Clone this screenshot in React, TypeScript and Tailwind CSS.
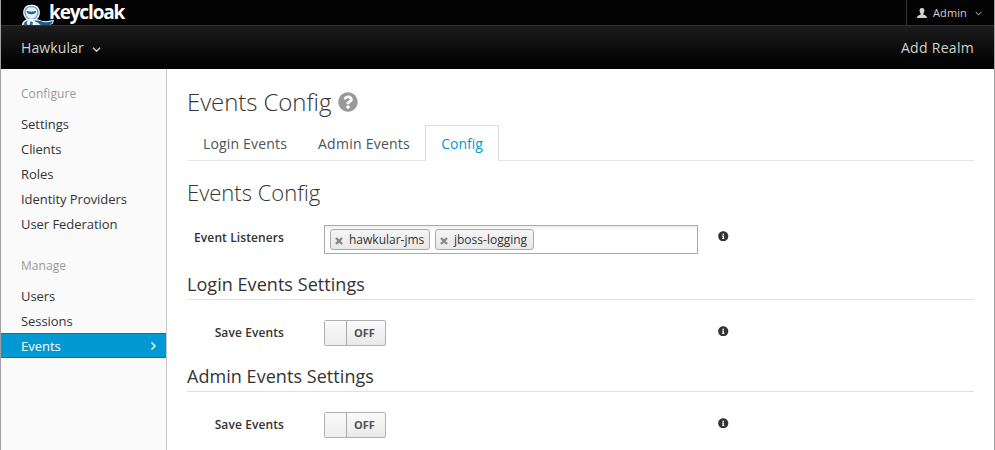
import React from "react";
import { FaInfoCircle, FaQuestionCircle } from "react-icons/fa";

function Logo() {
  return (
    <svg width="34" height="21" viewBox="0 0 34 21" className="shrink-0">
      <path d="M1 21C1 18.500 2.500 16.500 5.500 15.500C2.500 12.500 1.500 9.500 2.500 6C3.500 2.500 6 .8 10.300 .8C15 .8 17.500 2.500 18.500 6C19.500 9.500 18.500 12.500 16 15.300C19 15.800 21 17.500 25 17.300C28 17 30 16.200 33 16L32 19.500L29 21Z" fill="#ffffff" />
      <path d="M10.300 2C14.500 2 16.800 3.600 17.500 6.500C18.300 9.800 17 12.500 14.500 15H6.500C3.800 12.500 2.800 9.800 3.400 6.500C4 3.600 6.200 2 10.300 2Z" fill="#6fa9cd" />
      <path d="M10.300 3.200C14 3.200 16 5 16.200 8C16.200 11.500 14 14.700 10.300 14.700C6.800 14.700 4.700 11.500 4.700 8C4.700 5 7 3.200 10.300 3.200Z" fill="#e6f0f7" />
      <path d="M5.500 7L10.300 7.800L15.300 7C15 9.300 13.300 10.300 10.300 10.300C7.500 10.300 5.800 9.300 5.500 7Z" fill="#17639a" />
      <path d="M12.500 16.500C19 16 21.500 18 25 18.200C28 18.200 30 17.500 32 17L31 19L29 21H18L16 18.500Z" fill="#1b5f92" />
      <path d="M2.500 21C3 18.500 4 17.500 7 16.300L6 18.500L6.500 21ZM10 17L12 18.500L11.500 21H8.500L9 18.500Z" fill="#2c6f9f" />
      <path d="M13 21L14 18.500L17 18.500L19.500 21Z" fill="#e0ebf3" />
    </svg>
  );
}

function Chevron({ className, size, right = false }: { className?: string; size: number; right?: boolean }) {
  return (
    <svg width={size} height={size} viewBox="0 0 10 10" className={className} fill="none" stroke="currentColor" strokeWidth="1.4">
      <path d={right ? "M3.500 1.500L7 5L3.500 8.500" : "M1 3L5 7L9 3"} />
    </svg>
  );
}

function NavGroup({ title, items, active }: { title: string; items: string[]; active?: string }) {
  return (
    <div>
      <div className="flex h-[26px] items-center pl-5 text-[12px] tracking-[0.05px] text-[#999]">{title}</div>
      <div className="pt-[4px]">
        {items.map((item) => (
          <div
            key={item}
            className={
              item === active
                ? "flex h-[25px] items-center justify-between border-y border-[#0079ad] bg-[#0099d3] pr-[8px] pl-5 text-[13px] text-white"
                : "flex h-[25px] items-center pl-5 text-[13px] tracking-[-0.05px] text-[#333]"
            }
          >
            <span className="pt-[2px]">{item}</span>
            {item === active && <Chevron size={10} right />}
          </div>
        ))}
      </div>
    </div>
  );
}

function Tag({ label, className }: { label: string; className: string }) {
  return (
    <span className={`flex h-[21px] items-center rounded-[3px] border border-[#aaa] bg-linear-to-b from-[#f4f4f4] to-[#e8e8e8] pl-[4px] text-[12px] text-[#333] ${className}`}>
      <svg width="8" height="8" viewBox="0 0 8 8" className="mt-[2px] mr-[6px] shrink-0" stroke="#888" strokeWidth="2.4">
        <path d="M1 1L7 7M7 1L1 7" />
      </svg>
      {label}
    </span>
  );
}

function Toggle() {
  return (
    <div className="flex h-[26px] w-[62px] rounded-[2px] border border-[#b0b0b0] bg-linear-to-b from-[#fafafa] to-[#e9e9e9]">
      <div className="w-[22px] border-r border-[#aaa] bg-linear-to-b from-[#fafafa] to-[#ededed]" />
      <div className="flex flex-1 items-center justify-center pr-[3px] text-[11px] font-bold text-[#4d5258]">OFF</div>
    </div>
  );
}

function Row({ label, children }: { label: string; children: React.ReactNode }) {
  return (
    <div className="flex">
      <div className="w-[97px] pt-[3px] text-right text-[12px] leading-[20px] font-semibold tracking-[0.1px] whitespace-nowrap text-[#333]">{label}</div>
      <div className="ml-10 w-[394px]">{children}</div>
      <FaInfoCircle size={10.5} className="mt-[5.5px] text-[#333]" />
    </div>
  );
}

function Section({ title }: { title: string }) {
  return (
    <div className="h-[30px] border-b border-[#e0e0e0] text-[18px] leading-[28px] tracking-[0.05px] text-[#333]">{title}</div>
  );
}

export default function App() {
  return (
    <div className="flex h-[450px] w-[995px] flex-col overflow-hidden border-x border-[#a0a0a0] bg-white font-['Open_Sans',sans-serif]">
      <header className="shrink-0 text-[#d1d1d1]">
        <div className="flex h-[25px] justify-between bg-[#030303]">
          <div className="flex pl-5">
            <div className="pt-1">
              <Logo />
            </div>
            <span className="-ml-[6px] text-[19px] leading-[24px] font-bold tracking-[-1.15px] text-white">keycloak</span>
          </div>
          <div className="flex w-[88px] items-center border-l border-[#333] pl-[10px] text-[11px]">
            <svg width="10" height="10" viewBox="0 0 10 10" fill="currentColor">
              <path d="M5 0C7 0 7.600 1.200 7.400 3C7.200 4.500 6.500 5 6.300 6C6.300 7.300 10 7 10 10H0C0 7 3.700 7.300 3.700 6C3.500 5 2.800 4.500 2.600 3C2.400 1.200 3 0 5 0Z" />
            </svg>
            <span className="mr-[8px] ml-[6px] pt-px tracking-[0.1px]">Admin</span>
            <Chevron size={7} className="mt-[2px]" />
          </div>
        </div>
        <div className="flex h-[44px] items-center justify-between border-t border-[#333] bg-linear-to-b from-[#1d1d1d] to-[#020202] px-5 text-[14px]">
          <div className="flex items-center tracking-[0.12px]">
            Hawkular
            <Chevron size={9} className="mt-[3px] ml-[8px]" />
          </div>
          <span className="tracking-[0.3px]">Add Realm</span>
        </div>
      </header>
      <div className="flex min-h-0 flex-1">
        <aside className="w-[166px] shrink-0 border-r border-[#c8c8c8] bg-[#fafafa] pt-[12px]">
          <NavGroup title="Configure" items={["Settings", "Clients", "Roles", "Identity Providers", "User Federation"]} />
          <div className="h-[17px]" />
          <NavGroup title="Manage" items={["Users", "Sessions", "Events"]} active="Events" />
        </aside>
        <main className="w-[807px] pl-5">
          <h1 className="flex h-[56px] items-center pt-[10px] text-[24px] font-light tracking-[-0.08px] text-[#333]">
            Events Config
            <FaQuestionCircle size={20} className="ml-[7px] text-[#999]" />
          </h1>
          <div className="flex h-[36px] border-b border-[#e6e6e6] text-[14px] text-[#4d5258]">
            <div className="w-[115px] pl-4 leading-[37px] tracking-[0.17px]">Login Events</div>
            <div className="w-[123px] pl-4 leading-[37px] tracking-[0.25px]">Admin Events</div>
            <div className="-mb-px h-[36px] w-[74px] border border-b-0 border-[#dcdcdc] bg-white text-center leading-[36px] text-[#0099d3]">Config</div>
          </div>
          <h2 className="h-[64px] pt-[14px] text-[22px] leading-[34px] font-light text-[#333]">Events Config</h2>
          <div className="h-[45px]">
            <Row label="Event Listeners">
              <div className="flex h-[29px] w-[374px] items-start border border-[#aaa] bg-linear-to-b from-[#eee] to-white to-15% pt-[3px] pl-[5px]">
                <Tag label="hawkular-jms" className="mr-[5px] w-[100px]" />
                <Tag label="jboss-logging" className="w-[99px]" />
              </div>
            </Row>
          </div>
          <Section title="Login Events Settings" />
          <div className="h-[62px] pt-[20px]">
            <Row label="Save Events">
              <Toggle />
            </Row>
          </div>
          <Section title="Admin Events Settings" />
          <div className="pt-[20px]">
            <Row label="Save Events">
              <Toggle />
            </Row>
          </div>
        </main>
      </div>
    </div>
  );
}
